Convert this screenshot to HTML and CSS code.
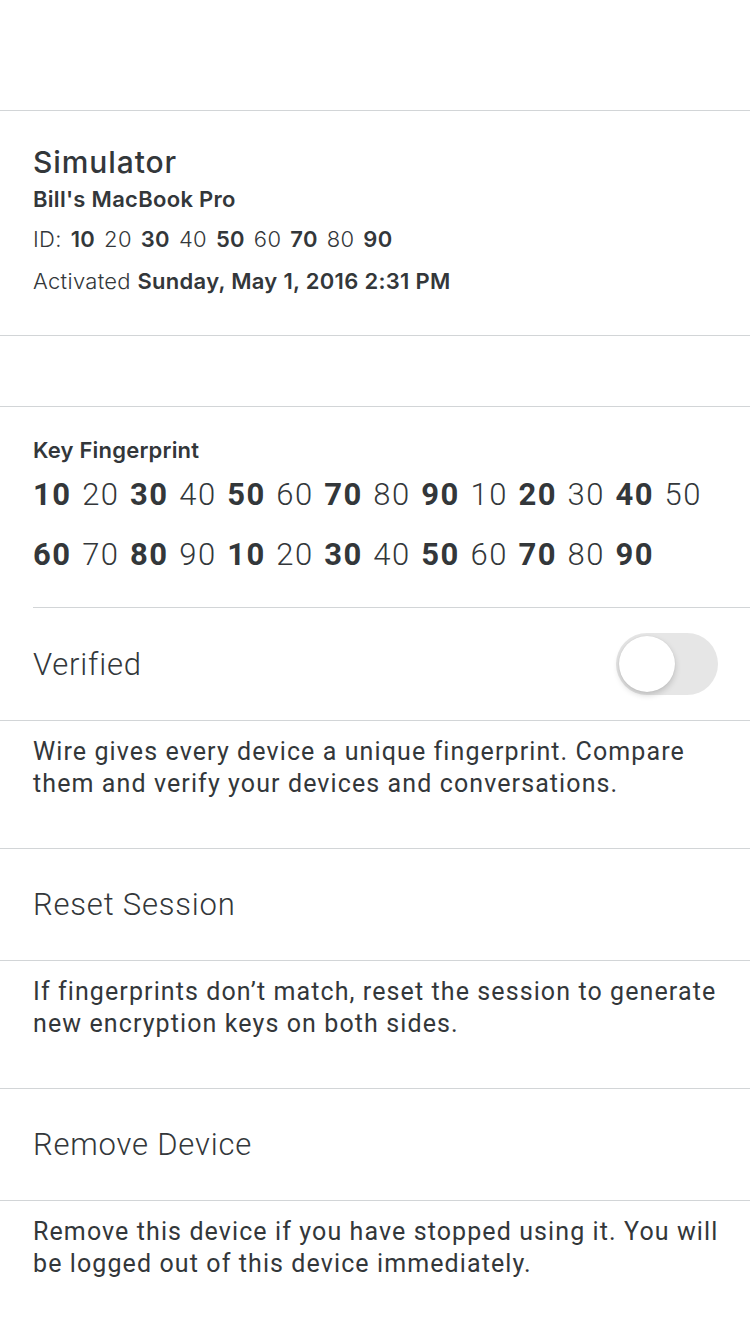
FILE: index.html
```html
<!DOCTYPE html>
<html>
<head>
<meta charset="utf-8">
<link rel="stylesheet" href="styles.css">
</head>
<body>
<div class="screen">
  <div class="topbar"></div>
  <section class="device">
    <div class="dev-name">Simulator</div>
    <div class="dev-model">Bill's MacBook Pro</div>
    <div class="dev-id">ID: <b>10</b> 20 <b>30</b> 40 <b>50</b> 60 <b>70</b> 80 <b>90</b></div>
    <div class="dev-act">Activated <b>Sunday, May 1, 2016 2:31 PM</b></div>
  </section>
  <div class="spacer"></div>
  <section class="fingerprint">
    <div class="fp-title">Key Fingerprint</div>
    <div class="fp-line"><b>10</b> 20 <b>30</b> 40 <b>50</b> 60 <b>70</b> 80 <b>90</b> 10 <b>20</b> 30 <b>40</b> 50</div>
    <div class="fp-line"><b>60</b> 70 <b>80</b> 90 <b>10</b> 20 <b>30</b> 40 <b>50</b> 60 <b>70</b> 80 <b>90</b></div>
  </section>
  <div class="row row-first">
    <span class="row-label">Verified</span>
    <span class="toggle"><span class="knob"></span></span>
  </div>
  <p class="desc">Wire gives every device a unique fingerprint. Compare them and verify your devices and conversations.</p>
  <div class="row">
    <span class="row-label">Reset Session</span>
  </div>
  <p class="desc">If fingerprints don’t match, reset the session to generate new encryption keys on both sides.</p>
  <div class="row">
    <span class="row-label">Remove Device</span>
  </div>
  <p class="desc desc-last">Remove this device if you have stopped using it. You will be logged out of this device immediately.</p>
</div>
</body>
</html>
```

FILE: styles.css
```css
html, body {
  margin: 0;
  padding: 0;
  background: #ffffff;
}
.screen {
  width: 750px;
  min-height: 1334px;
  color: #33373a;
  font-family: Roboto, "Liberation Sans", sans-serif;
}
.topbar {
  height: 110px;
  border-bottom: 1px solid #d2d5d7;
}
.device {
  height: 225px;
  box-sizing: border-box;
  padding: 33px 33px 0;
  border-bottom: 1px solid #d2d5d7;
  font-family: Inter, "Liberation Sans", sans-serif;
}
.dev-name {
  font-size: 30px;
  font-weight: 500;
  line-height: 36px;
  letter-spacing: 0.9px;
}
.dev-model {
  font-size: 22px;
  font-weight: 600;
  line-height: 38px;
  letter-spacing: 0.3px;
}
.dev-id, .dev-act {
  font-size: 22px;
  font-weight: 300;
  line-height: 42px;
  letter-spacing: 0.3px;
}
.dev-id {
  word-spacing: 2.5px;
}
.dev-id b, .dev-act b {
  font-weight: 600;
}
.spacer {
  height: 70px;
  border-bottom: 1px solid #d2d5d7;
}
.fingerprint {
  padding: 29px 33px 22px;
}
.fp-title {
  font-family: Inter, "Liberation Sans", sans-serif;
  font-size: 22px;
  font-weight: 600;
  line-height: 29px;
  letter-spacing: 0.2px;
}
.fp-line {
  font-size: 31px;
  font-weight: 300;
  line-height: 60px;
  white-space: nowrap;
  letter-spacing: 1.5px;
  word-spacing: 1.5px;
}
.fp-line b {
  font-weight: 700;
}
.row {
  height: 112px;
  box-sizing: border-box;
  display: flex;
  align-items: center;
  justify-content: space-between;
  padding: 0 32px 0 33px;
  border-bottom: 1px solid #d2d5d7;
}
.row-first {
  margin-left: 33px;
  padding-left: 0;
  border-top: 1px solid #d2d5d7;
  height: 113px;
  border-bottom: none;
  position: relative;
}
.row-first::after {
  content: "";
  position: absolute;
  left: -33px;
  right: 0;
  bottom: -1px;
  border-bottom: 1px solid #d2d5d7;
}
.row-label {
  font-size: 31px;
  font-weight: 300;
  letter-spacing: 0.8px;
}
.toggle {
  width: 102px;
  height: 62px;
  border-radius: 31px;
  background: #e6e6e6;
  display: flex;
  align-items: center;
  padding-left: 3px;
  box-sizing: border-box;
}
.knob {
  width: 56px;
  height: 56px;
  border-radius: 50%;
  background: #ffffff;
  box-shadow: 0 3px 6px rgba(0, 0, 0, 0.18), 0 0 1px rgba(0, 0, 0, 0.12);
}
.desc {
  margin: 0;
  height: 128px;
  box-sizing: border-box;
  padding: 15px 20px 0 33px;
  font-size: 25px;
  line-height: 32px;
  font-weight: 400;
  letter-spacing: 1.1px;
  border-bottom: 1px solid #d2d5d7;
}
.row-first + .desc {
  margin-top: 1px;
}
.desc-last {
  border-bottom: none;
}
```
